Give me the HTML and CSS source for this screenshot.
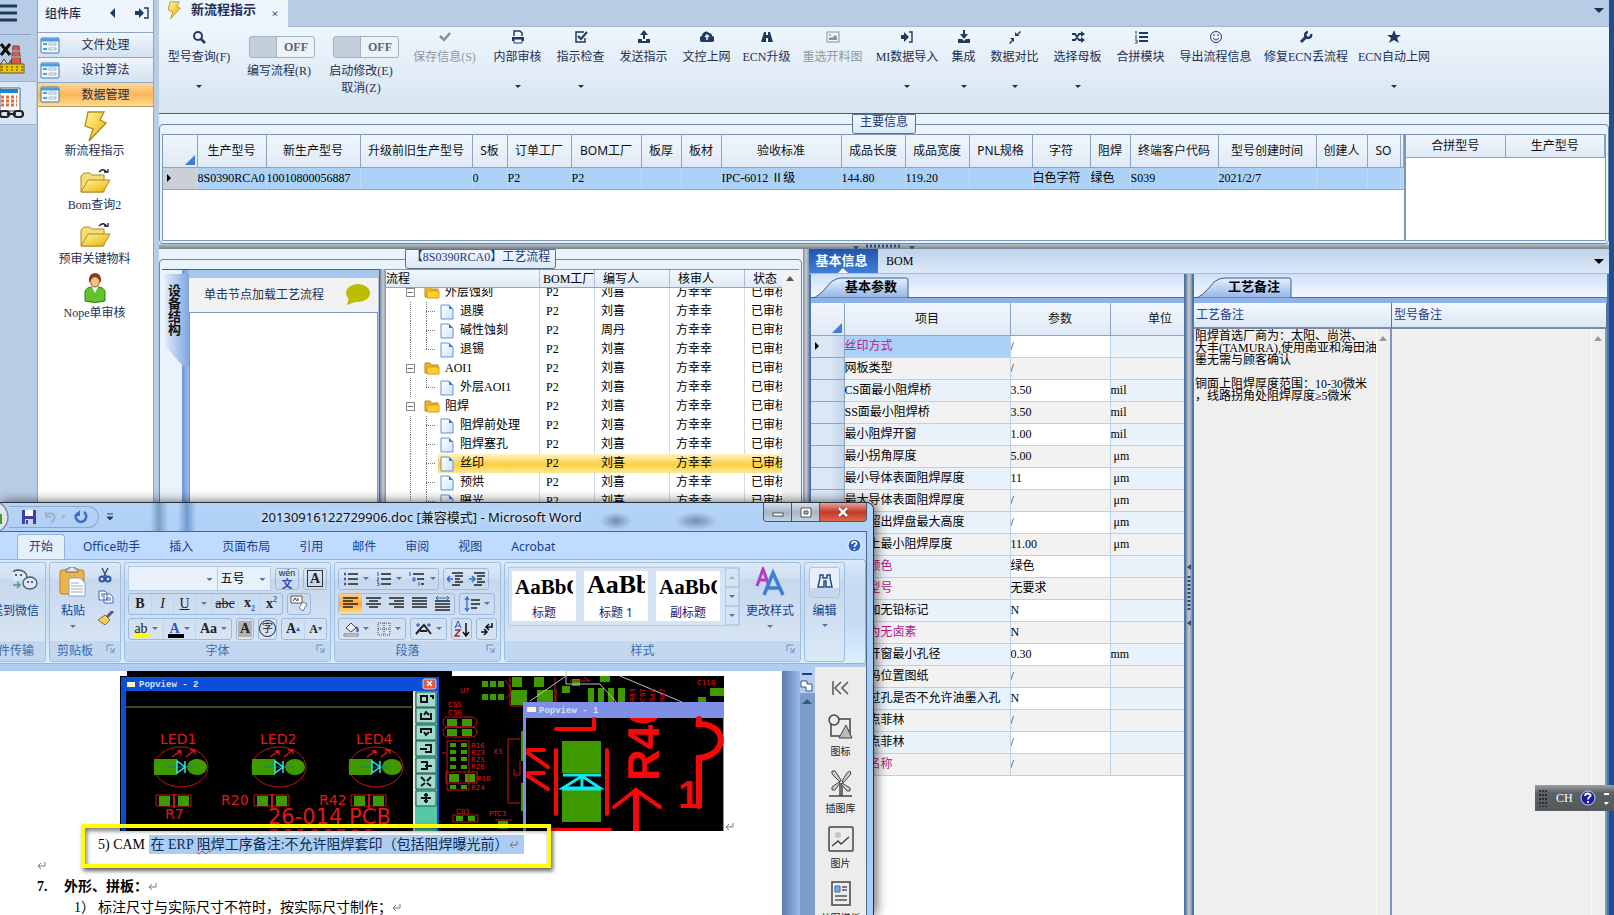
FILE: index.html
```html
<!DOCTYPE html>
<html lang="zh-CN">
<head>
    <meta charset="UTF-8">
    <meta name="viewport" content="width=device-width, initial-scale=1.0">
    <title>新流程指示</title>
    <link rel="stylesheet" href="styles.css">
</head>
<body>
    <!-- Shared icons -->
    <svg class="defs" aria-hidden="true">
        <defs>
            <linearGradient id="gold" x1="0" y1="0" x2="1" y2="1"><stop offset="0" stop-color="#fff6a0"/><stop offset="1" stop-color="#eab000"/></linearGradient>
            <linearGradient id="paper" x1="0" y1="0" x2="1" y2="1"><stop offset="0" stop-color="#fff"/><stop offset="1" stop-color="#cfe4fb"/></linearGradient>
        </defs>
        <symbol id="bolt" viewBox="0 0 24 32"><path d="M5 2H21L17 10L23 13L6 31L10 19L2 16Z" fill="url(#gold)" stroke="#b08a1c" stroke-width="1.3"/></symbol>
        <symbol id="open-folder" viewBox="0 0 32 26"><path d="M2 24V8L5 5H11L13 7H25V24Z" fill="#f7dd78" stroke="#b08a1c"/><path d="M2 24L9 12H31L24 24Z" fill="url(#gold)" stroke="#b08a1c"/><path d="M20 4Q25 -1 28 5M25 4H29V1" fill="none" stroke="#223" stroke-width="1.3"/></symbol>
        <symbol id="folder" viewBox="0 0 16 13"><path d="M1 11V1H6L7 3H14V11Z" fill="#f3b61f" stroke="#b98a2a"/><path d="M3 12V5H15V12Z" fill="#ffd02c" stroke="#d79a1c"/></symbol>
        <symbol id="page" viewBox="0 0 14 16"><path d="M1 1H9L13 5V15H1Z" fill="url(#paper)" stroke="#5f94d6"/><path d="M9 1V5H13Z" fill="#3d7ad0"/></symbol>
        <symbol id="form" viewBox="0 0 20 17"><rect x="1" y="1" width="18" height="15" rx="1" fill="#f4fafe" stroke="#3f78b4"/><path d="M1 3H19" stroke="#4f9ad8" stroke-width="3"/><path d="M3 7H7M3 12H7" stroke="#4aa0dc" stroke-width="2"/><path d="M9 6H16V8H9ZM9 11H16V13H9Z" fill="#fff" stroke="#8ba4b8" stroke-width=".8"/></symbol>
        <symbol id="ret" viewBox="0 0 9 9"><path d="M8 1V5H2M4 2L1 5L4 8" fill="none" stroke="#777"/></symbol>
        <symbol id="launch" viewBox="0 0 9 9"><path d="M1 7V1H7" fill="none" stroke="#6c8fb8"/><path d="M4 4L8 8M8 4V8H4" fill="none" stroke="#6c8fb8"/></symbol>
    </svg>

    <div class="app">
        <nav class="strip">
            <button class="burger" aria-label="菜单"><svg width="18" height="20"><path d="M0 4H17M0 11H17M0 18H17" stroke="#1f3a5f" stroke-width="3"/></svg></button>
            <button class="strip-btn" aria-label="工厂">
                <svg width="25" height="32" viewBox="0 0 25 32"><path d="M1 2L10 13M10 2L1 13" stroke="#111" stroke-width="3"/><path d="M13 4H19L21 24H11Z" fill="#d65a4a" stroke="#7c3b34"/><path d="M12 9H20M11 15H21" stroke="#8d99a8" stroke-width="2"/><path d="M0 23L4 17L8 23L11 18V24H0Z" fill="#ddd" stroke="#444"/><path d="M0 22H24V31H0Z" fill="#ecc514" stroke="#6b5b10"/><path d="M1 25H23M1 28H23" stroke="#413808" stroke-dasharray="2 3"/></svg>
            </button>
            <button class="strip-btn current" aria-label="数据">
                <svg width="25" height="32" viewBox="0 0 25 32"><path d="M0 1H20V24H0Z" fill="#fff" stroke="#49667f"/><path d="M0 4H18" stroke="#2183cf" stroke-width="4"/><path d="M1 10H17M1 14H17M1 18H17" stroke="#e46b3c" stroke-width="3" stroke-dasharray="3 2"/><g fill="none" stroke="#222" stroke-width="2.2"><rect x="0" y="24" width="9" height="6" rx="3"/><rect x="14" y="24" width="9" height="6" rx="3"/><path d="M7 27H16"/></g></svg>
            </button>
        </nav>

        <aside class="sidebar">
            <header><b>组件库</b>
                <svg width="8" height="12"><path d="M6 1V11L1 6Z" fill="#1f3a5f"/></svg>
                <svg width="14" height="12" viewBox="0 0 14 12"><path d="M0 4H4V1L9 6L4 11V8H0Z" fill="#1f3a5f"/><path d="M9 1H13V11H9" fill="none" stroke="#1f3a5f" stroke-width="1.4"/></svg>
            </header>
            <button class="cat"><svg width="20" height="17"><use href="#form"/></svg><span>文件处理</span></button>
            <button class="cat"><svg width="20" height="17"><use href="#form"/></svg><span>设计算法</span></button>
            <button class="cat active"><svg width="20" height="17"><use href="#form"/></svg><span>数据管理</span></button>
            <div class="modules">
                <button><svg width="24" height="32"><use href="#bolt"/></svg>新流程指示</button>
                <button><svg width="32" height="32" viewBox="0 -4 32 32"><use href="#open-folder" width="32" height="26"/></svg>Bom查询2</button>
                <button><svg width="32" height="32" viewBox="0 -4 32 32"><use href="#open-folder" width="32" height="26"/></svg>预审关键物料</button>
                <button><svg width="24" height="32" viewBox="0 0 24 32"><path d="M2 29V20Q3 15 9 15H15Q21 15 22 20V29Q12 32 2 29Z" fill="#62c32c" stroke="#2f7d12"/><path d="M9 15L12 21L15 15Z" fill="#fff"/><ellipse cx="12" cy="9" rx="4.500" ry="6" fill="#f2c48c" stroke="#8b5a2b"/><path d="M6 11Q5 1 12 1Q19 1 18 11Q16 6 12 5Q8 6 6 11Z" fill="#8c3a18"/></svg>Nope单审核</button>
            </div>
        </aside>

        <main class="main">
            <div class="tabbar">
                <div class="tab"><svg width="14" height="20"><use href="#bolt"/></svg><b>新流程指示</b><button aria-label="关闭">×</button></div>
                <i class="down"></i>
            </div>

            <div class="toolbar">
                <button><svg width="14" height="14"><circle cx="6" cy="6" r="4" fill="none" stroke="#1f3a5f" stroke-width="2"/><path d="M9 9L13 13" stroke="#1f3a5f" stroke-width="2.500"/></svg>型号查询(F)<i class="caret"></i></button>
                <label class="toggle"><input type="checkbox"><span class="track">OFF</span>编写流程(R)</label>
                <label class="toggle"><input type="checkbox"><span class="track">OFF</span>启动修改(E)<br>取消(Z)</label>
                <button disabled><svg width="14" height="14"><path d="M2 6L6 10L12 3" fill="none" stroke="#8b9096" stroke-width="2.500"/></svg>保存信息(S)</button>
                <button><svg width="14" height="14"><path d="M3 6V1H9L11 3V6" fill="none" stroke="#1f3a5f" stroke-width="1.500"/><path d="M1 7H13V11H1Z" fill="#1f3a5f"/><path d="M3 9H11V13H3Z" fill="#eef5fc" stroke="#1f3a5f"/></svg>内部审核<i class="caret"></i></button>
                <button><svg width="14" height="14"><path d="M10 2H2V12H11V8" fill="none" stroke="#1f3a5f" stroke-width="1.500"/><path d="M4 6L7 9L13 2" fill="none" stroke="#1f3a5f" stroke-width="2"/></svg>指示检查<i class="caret"></i></button>
                <button><svg width="14" height="14"><path d="M7 0L11 5H8V9H6V5H3Z" fill="#1f3a5f"/><path d="M1 9H5V11H9V9H13V13H1Z" fill="#1f3a5f"/></svg>发送指示</button>
                <button><svg width="14" height="14"><path d="M3 12A3 3 0 0 1 2 6A4 4 0 0 1 9 3A3 3 0 0 1 12 6A3 3 0 0 1 11 12Z" fill="#1f3a5f"/><path d="M7 5V10M5 7L7 5L9 7" fill="none" stroke="#eef5fc" stroke-width="1.500"/></svg>文控上网</button>
                <button><svg width="14" height="14"><path d="M4 2H6V12H1Z M8 2H10L13 12H8Z M5 5H9V8H5Z" fill="#1f3a5f"/></svg>ECN升级</button>
                <button disabled><svg width="14" height="14"><rect x="1" y="2" width="12" height="10" fill="none" stroke="#8b9096"/><path d="M3 10V8L5 7L6 8L9 5L11 7V10Z" fill="#8b9096"/><circle cx="4" cy="5" r="1" fill="#8b9096"/></svg>重选开料图</button>
                <button><svg width="14" height="14"><path d="M1 5H4V2L9 7L4 12V9H1Z" fill="#1f3a5f"/><path d="M9 2H12V12H9" fill="none" stroke="#1f3a5f" stroke-width="1.400"/></svg>MI数据导入<i class="caret"></i></button>
                <button><svg width="14" height="14"><path d="M7 9L3 4H6V0H8V4H11Z" fill="#1f3a5f"/><path d="M1 9H5L7 11L9 9H13V13H1Z" fill="#1f3a5f"/></svg>集成<i class="caret"></i></button>
                <button><svg width="14" height="14"><path d="M7 6V2L9 4L12 1L13 2L10 5L12 6ZM6 8H2L4 10L1 13L2 14L5 11L6 12Z" fill="#1f3a5f"/></svg>数据对比<i class="caret"></i></button>
                <button><svg width="14" height="14"><path d="M1 4H4L8 10H12M1 10H4L8 4H12" fill="none" stroke="#1f3a5f" stroke-width="1.800"/><path d="M10 1L14 4L10 7ZM10 7L14 10L10 13Z" fill="#1f3a5f"/></svg>选择母板<i class="caret"></i></button>
                <button><svg width="14" height="14"><path d="M5 3H14M5 7H14M5 11H14" stroke="#1f3a5f" stroke-width="2"/><path d="M2 1V4M1 6H3M1 8H3M1 10H3V13H1" fill="none" stroke="#1f3a5f"/></svg>合拼模块</button>
                <button><svg width="14" height="14"><circle cx="7" cy="7" r="5.500" fill="none" stroke="#1f3a5f"/><path d="M4 8Q7 12 10 8M5 4V6M9 4V6" fill="none" stroke="#1f3a5f"/></svg>导出流程信息</button>
                <button><svg width="14" height="14"><path d="M2 12L8 6" stroke="#1f3a5f" stroke-width="3"/><path d="M12 4A3 3 0 1 1 9 2" fill="none" stroke="#1f3a5f" stroke-width="2.500"/></svg>修复ECN丢流程</button>
                <button><svg width="14" height="14"><path d="M7 0L9 5L14 5L10 8L12 13L7 10L2 13L4 8L0 5L5 5Z" fill="#1f3a5f"/></svg>ECN自动上网<i class="caret"></i></button>
            </div>

            <fieldset class="group">
                <legend>主要信息</legend>
                <div class="info">
                    <div class="info-left">
                        <table class="grid models">
                            <colgroup><col class="w34"><col class="w69"><col class="w94"><col class="w112"><col class="w35"><col class="w64"><col class="w70"><col class="w40"><col class="w40"><col class="w120"><col class="w64"><col class="w64"><col class="w63"><col class="w58"><col class="w40"><col class="w88"><col class="w98"><col class="w51"><col class="w33"><col></colgroup>
                            <tr><th class="corner"></th><th>生产型号</th><th>新生产型号</th><th>升级前旧生产型号</th><th>S板</th><th>订单工厂</th><th>BOM工厂</th><th>板厚</th><th>板材</th><th>验收标准</th><th>成品长度</th><th>成品宽度</th><th>PNL规格</th><th>字符</th><th>阻焊</th><th>终端客户代码</th><th>型号创建时间</th><th>创建人</th><th>SO</th><th></th></tr>
                            <tr><td class="mark"></td><td>8S0390RCA0</td><td>10010800056887</td><td></td><td>0</td><td>P2</td><td>P2</td><td></td><td></td><td>IPC-6012 Ⅱ级</td><td>144.80</td><td>119.20</td><td></td><td>白色字符</td><td>绿色</td><td>S039</td><td>2021/2/7</td><td></td><td></td><td></td></tr>
                        </table>
                    </div>
                    <div class="info-right">
                        <table class="grid pair"><tr><th>合拼型号</th><th>生产型号</th></tr></table>
                    </div>
                </div>
            </fieldset>

            <div class="hsplit"><svg width="62" height="6"><path d="M0 2H6L3 6Z M56 2H62L59 6Z" fill="#2c4c7c"/><path d="M13 2H49" stroke="#2c4c7c" stroke-width="3" stroke-dasharray="2 2"/></svg></div>

            <div class="lower">
                <section class="flow">
                    <fieldset class="group">
                        <legend>【8S0390RCA0】工艺流程</legend>
                        <div class="flow-body">
                            <div class="device-side"><div class="device-tab"><b>设备结构</b></div></div>
                            <div class="device">
                                <div class="hint">单击节点加载工艺流程<svg width="26" height="22"><ellipse cx="13" cy="9" rx="12" ry="9" fill="#bcbc00"/><path d="M4 13L2 21L13 17Z" fill="#bcbc00"/></svg></div>
                                <div class="blank"></div>
                            </div>
                            <div class="vsplit"></div>
                            <div class="tree">
                                <div class="tree-head tr"><span>流程</span><span>BOM工厂</span><span>编写人</span><span>核审人</span><span>状态</span></div>
                                <div class="tree-body">
                                    <div class="tr"><span class="dir"><i>−</i><svg width="16" height="13"><use href="#folder"/></svg>外层蚀刻</span><span>P2</span><span>刘喜</span><span>方幸幸</span><span>已审核</span></div>
                                    <div class="tr"><span class="leaf"><svg width="14" height="16"><use href="#page"/></svg>退膜</span><span>P2</span><span>刘喜</span><span>方幸幸</span><span>已审核</span></div>
                                    <div class="tr"><span class="leaf"><svg width="14" height="16"><use href="#page"/></svg>碱性蚀刻</span><span>P2</span><span>周丹</span><span>方幸幸</span><span>已审核</span></div>
                                    <div class="tr"><span class="leaf last"><svg width="14" height="16"><use href="#page"/></svg>退锡</span><span>P2</span><span>刘喜</span><span>方幸幸</span><span>已审核</span></div>
                                    <div class="tr"><span class="dir"><i>−</i><svg width="16" height="13"><use href="#folder"/></svg>AOI1</span><span>P2</span><span>刘喜</span><span>方幸幸</span><span>已审核</span></div>
                                    <div class="tr"><span class="leaf last"><svg width="14" height="16"><use href="#page"/></svg>外层AOI1</span><span>P2</span><span>刘喜</span><span>方幸幸</span><span>已审核</span></div>
                                    <div class="tr"><span class="dir"><i>−</i><svg width="16" height="13"><use href="#folder"/></svg>阻焊</span><span>P2</span><span>刘喜</span><span>方幸幸</span><span>已审核</span></div>
                                    <div class="tr"><span class="leaf"><svg width="14" height="16"><use href="#page"/></svg>阻焊前处理</span><span>P2</span><span>刘喜</span><span>方幸幸</span><span>已审核</span></div>
                                    <div class="tr"><span class="leaf"><svg width="14" height="16"><use href="#page"/></svg>阻焊塞孔</span><span>P2</span><span>刘喜</span><span>方幸幸</span><span>已审核</span></div>
                                    <div class="tr picked"><span class="leaf"><svg width="14" height="16"><use href="#page"/></svg>丝印</span><span>P2</span><span>刘喜</span><span>方幸幸</span><span>已审核</span></div>
                                    <div class="tr"><span class="leaf"><svg width="14" height="16"><use href="#page"/></svg>预烘</span><span>P2</span><span>刘喜</span><span>方幸幸</span><span>已审核</span></div>
                                    <div class="tr"><span class="leaf"><svg width="14" height="16"><use href="#page"/></svg>曝光</span><span>P2</span><span>刘喜</span><span>方幸幸</span><span>已审核</span></div>
                                </div>
                            </div>
                            <div class="scroll"><i class="up"></i></div>
                        </div>
                    </fieldset>
                </section>
                <div class="vsplit"></div>
                <section class="detail">
                    <div class="detail-tabs"><button class="on">基本信息</button><button>BOM</button><i class="down"></i></div>
                    <div class="detail-body">
                        <div class="params">
                            <div class="slant-bar"><div class="slant"><svg width="98" height="21" viewBox="0 0 98 21"><path d="M1 21Q7 21 20 5Q25 1 30 1H95Q97 1 97 3V21Z" fill="url(#slantfill)" stroke="#3c5f94"/><defs><linearGradient id="slantfill" x1="0" y1="0" x2="0" y2="1"><stop offset="0" stop-color="#e6f0fd"/><stop offset="1" stop-color="#93b5e6"/></linearGradient></defs></svg><b>基本参数</b></div></div>
                            <div class="params-scroll">
                            <table class="grid values">
                                <colgroup><col class="w33"><col class="w166"><col class="w100"><col class="w100"></colgroup>
                                <tr><th class="corner"></th><th>项目</th><th>参数</th><th>单位</th></tr>
                                <tr class="cur"><td class="mark"></td><td class="key">丝印方式</td><td>/</td><td></td></tr>
                                <tr><td></td><td>网板类型</td><td>/</td><td></td></tr>
                                <tr><td></td><td>CS面最小阻焊桥</td><td>3.50</td><td>mil</td></tr>
                                <tr><td></td><td>SS面最小阻焊桥</td><td>3.50</td><td>mil</td></tr>
                                <tr><td></td><td>最小阻焊开窗</td><td>1.00</td><td>mil</td></tr>
                                <tr><td></td><td>最小拐角厚度</td><td>5.00</td><td> μm</td></tr>
                                <tr><td></td><td>最小导体表面阻焊厚度</td><td>11</td><td> μm</td></tr>
                                <tr><td></td><td>最大导体表面阻焊厚度</td><td>/</td><td> μm</td></tr>
                                <tr><td></td><td>塞孔超出焊盘最大高度</td><td>/</td><td> μm</td></tr>
                                <tr><td></td><td>基材上最小阻焊厚度</td><td>11.00</td><td> μm</td></tr>
                                <tr><td></td><td class="key">阻焊颜色</td><td>绿色</td><td></td></tr>
                                <tr><td></td><td class="key">油墨型号</td><td>无要求</td><td></td></tr>
                                <tr><td></td><td>是否加无铅标记</td><td>N</td><td></td></tr>
                                <tr><td></td><td class="key">是否为无卤素</td><td>N</td><td></td></tr>
                                <tr><td></td><td>阻焊开窗最小孔径</td><td>0.30</td><td>mm</td></tr>
                                <tr><td></td><td>二维码位置图纸</td><td>/</td><td></td></tr>
                                <tr><td></td><td>阻焊过孔是否不允许油墨入孔</td><td>N</td><td></td></tr>
                                <tr><td></td><td>阻挡点菲林</td><td>/</td><td></td></tr>
                                <tr><td></td><td>阻挡点菲林</td><td>/</td><td></td></tr>
                                <tr><td></td><td class="key">网版名称</td><td>/</td><td></td></tr>
                            </table>
                            </div>
                        </div>
                        <div class="vsplit"><svg width="6" height="64"><path d="M5 1V7L1 4Z M5 57V63L1 60Z" fill="#2c4c7c"/><path d="M3 13V49" stroke="#2c4c7c" stroke-width="3" stroke-dasharray="2 2"/></svg></div>
                        <div class="notes">
                            <div class="slant-bar"><div class="slant"><svg width="98" height="21" viewBox="0 0 98 21"><path d="M1 21Q7 21 20 5Q25 1 30 1H95Q97 1 97 3V21Z" fill="url(#slantfill)" stroke="#3c5f94"/></svg><b>工艺备注</b></div></div>
                            <div class="notes-grid">
                                <label for="craft">工艺备注</label><label for="model">型号备注</label>
                                <div class="memo"><textarea id="craft" spellcheck="false">阻焊首选厂商为：太阳、尚洪、
大丰(TAMURA),使用南亚和海田油
墨无需与顾客确认

铜面上阻焊厚度范围：10-30微米
，线路拐角处阻焊厚度≥5微米</textarea><div class="scroll"><i class="up"></i></div></div>
                                <div class="memo"><textarea id="model"></textarea><div class="scroll"><i class="up"></i></div></div>
                            </div>
                        </div>
                    </div>
                </section>
            </div>
        </main>
    </div>

    <!-- Word window -->
    <div class="word">
        <div class="word-title">
            <svg class="orb" width="9" height="34"><circle cx="-8" cy="17" r="16" fill="#dfe6ee" stroke="#7d8b9c" stroke-width="1.500"/><path d="M0 14H2V24H0Z" fill="#4c9a1c"/></svg>
            <div class="qat">
                <button aria-label="保存"><svg width="14" height="14"><path d="M0 0H14V14H0Z" fill="#3f3fa8"/><path d="M3 0H11V6H3Z" fill="#fff"/><path d="M3 9H11V14H3Z" fill="#cfd4ec"/><path d="M4 10H6V14H4Z" fill="#3f3fa8"/></svg></button>
                <button aria-label="撤消"><svg width="22" height="14"><path d="M2 2V7H7M2 7Q5 2 9 4Q13 8 7 13" fill="none" stroke="#a3b4c8" stroke-width="2.200"/><path d="M17 5H22L19 9Z" fill="#a3b4c8"/></svg></button>
                <button aria-label="重复"><svg width="14" height="14"><path d="M4 3Q0 6 3 10Q7 14 11 10Q14 5 10 2" fill="none" stroke="#3d6fc9" stroke-width="2.500"/><path d="M6 0V6H0Z" fill="#3d6fc9"/></svg></button>
            </div>
            <svg class="more" width="8" height="8"><path d="M1 1H7M1 4H7L4 7Z" fill="#2b4569" stroke="#2b4569"/></svg>
            <span class="doc-name">20130916122729906.doc [兼容模式] - Microsoft Word</span>
            <div class="win-btns">
                <button aria-label="最小化"><svg width="12" height="12"><rect x="1" y="7" width="10" height="3" fill="#fff" stroke="#555"/></svg></button>
                <button aria-label="还原"><svg width="12" height="12"><path d="M1 2H11V11H1ZM4 5V8H8V5Z" fill="#fff" stroke="#555" fill-rule="evenodd"/></svg></button>
                <button class="close" aria-label="关闭"><svg width="12" height="12"><path d="M2 2L10 10M10 2L2 10" stroke="#6b2b25" stroke-width="4"/><path d="M2 2L10 10M10 2L2 10" stroke="#fff" stroke-width="2.500"/></svg></button>
            </div>
        </div>
        <div class="word-inner">
            <div class="ribbon-tabs">
                <button class="on">开始</button><button>Office助手</button><button>插入</button><button>页面布局</button><button>引用</button><button>邮件</button><button>审阅</button><button>视图</button><button>Acrobat</button>
                <svg class="help" width="15" height="15"><circle cx="7.500" cy="7.500" r="6.500" fill="#2d5fd0" stroke="#fff"/><path d="M5 6Q5 3.500 7.500 3.500Q10 4 9.500 6Q7.500 7.500 7.500 9M7.500 10.500V12" fill="none" stroke="#fff" stroke-width="1.600"/></svg>
            </div>
            <div class="ribbon">
                <div class="rgroup wechat">
                    <div class="rbody"><button class="big"><svg width="26" height="30"><g fill="#dbe8f7" stroke="#4b5a6b" stroke-width="1.300"><path d="M-2 15Q-6 5 4 3Q14 3 14 11"/><ellipse cx="17" cy="16" rx="7" ry="6"/></g><path d="M-1 18H7M4 15L7 18L4 21" fill="none" stroke="#4e9d73" stroke-width="1.500"/><path d="M3 7V9M8 7V9M15 14V16M19 14V16" stroke="#333" stroke-width="1.500"/></svg><span>发送到微信</span></button></div>
                    <div class="rlabel">文件传输</div>
                </div>
                <div class="rgroup clip">
                    <div class="rbody">
                        <button class="big"><svg width="28" height="30"><rect x="1" y="3" width="24" height="24" rx="2" fill="#eab44c" stroke="#b98323"/><path d="M7 5V2H10V0H16V2H19V5Z" fill="#e8e8e8" stroke="#666"/><path d="M10 11H21L26 16V29H10Z" fill="#fff" stroke="#8ba0bb"/><path d="M12 16H20M12 19H24M12 22H24M12 25H24" stroke="#9aa9bd"/></svg><span>粘贴</span><i class="caret"></i></button>
                        <div class="minis">
                            <button aria-label="剪切"><svg width="14" height="15"><path d="M4 0L9 10M10 0L5 10" stroke="#44566e" stroke-width="1.500"/><circle cx="4" cy="11" r="2.500" fill="none" stroke="#2d55b0" stroke-width="2"/><circle cx="10" cy="11" r="2.500" fill="none" stroke="#2d55b0" stroke-width="2"/></svg></button>
                            <button aria-label="复制"><svg width="16" height="14"><path d="M1 1H7L9 3V10H1ZM6 4H12L15 7V13H6Z" fill="#fff" stroke="#3f67ae"/><path d="M8 8H13M8 10H13M3 4H6M3 6H5" stroke="#3f67ae"/></svg></button>
                            <button aria-label="格式刷"><svg width="16" height="14"><path d="M15 0L9 6" stroke="#4b5a86" stroke-width="3"/><path d="M7 4L12 9L7 14L0 9Z" fill="#f0cf5a" stroke="#8d7421"/></svg></button>
                        </div>
                    </div>
                    <div class="rlabel">剪贴板<svg width="9" height="9"><use href="#launch"/></svg></div>
                </div>
                <div class="rgroup font">
                    <div class="rbody rows">
                        <div class="row">
                            <select class="face" aria-label="字体"><option></option></select><select class="size" aria-label="字号"><option>五号</option></select>
                            <button class="one"><svg width="22" height="20"><text x="11" y="7" class="py">wén</text><text x="11" y="19" class="wen">文</text></svg></button><button class="one"><span class="boxed">A</span></button>
                        </div>
                        <div class="row">
                            <div class="set w22s"><button><b>B</b></button><button><em>I</em></button><button><u>U</u></button><button class="slim"><i class="caret"></i></button><button class="wide"><s>abc</s></button><button><b>x<sub>2</sub></b></button><button><b>x<sup>2</sup></b></button></div>
                            <button class="one"><svg width="18" height="18"><path d="M1 1H12V8H1Z" fill="#fff" stroke="#555"/><path d="M3 6L5 3L7 6M8 3V6" fill="none" stroke="#333"/><path d="M9 13L13 7L17 9L13 16Z" fill="#fff" stroke="#777"/></svg></button>
                        </div>
                        <div class="row">
                            <div class="set"><button class="hl">ab<i class="caret"></i></button><button class="fc"><b>A</b><i class="caret"></i></button><button><b>Aa</b><i class="caret"></i></button></div>
                            <button class="one"><b class="shade">A</b></button><button class="one"><span class="ring">字</span></button>
                            <div class="set w22s"><button><b>A</b><sup>▴</sup></button><button><b class="sm">A</b><sup>▾</sup></button></div>
                        </div>
                    </div>
                    <div class="rlabel">字体<svg width="9" height="9"><use href="#launch"/></svg></div>
                </div>
                <div class="rgroup para">
                    <div class="rbody rows">
                        <div class="row">
                            <div class="set w33s">
                                <button><svg width="16" height="14"><path d="M5 2H15M5 7H15M5 12H15" stroke="#222" stroke-width="1.500"/><path d="M1 2H3M1 7H3M1 12H3" stroke="#2c5bb5" stroke-width="2.500"/></svg><i class="caret"></i></button>
                                <button><svg width="16" height="14"><path d="M5 2H15M5 7H15M5 12H15" stroke="#222" stroke-width="1.500"/><path d="M2 0V4M1 6H3L1 9H3M1 11H3V14H1" fill="none" stroke="#2c5bb5"/></svg><i class="caret"></i></button>
                                <button><svg width="18" height="14"><path d="M5 2H16M9 7H16M13 12H16" stroke="#222" stroke-width="1.500"/><path d="M2 0V4M5 6H7V9H5ZM11 10V14" fill="none" stroke="#2c5bb5"/></svg><i class="caret"></i></button>
                            </div>
                            <div class="set w22s">
                                <button><svg width="16" height="14"><path d="M5 1H16M8 4H16M8 7H13M8 10H16M5 13H13" stroke="#222" stroke-width="1.500"/><path d="M6 7H1M3 4L0 7L3 10" fill="none" stroke="#2c6bd5" stroke-width="1.500"/></svg></button>
                                <button><svg width="16" height="14"><path d="M5 1H16M8 4H16M8 7H13M8 10H16M5 13H13" stroke="#222" stroke-width="1.500"/><path d="M0 7H5M3 4L6 7L3 10" fill="none" stroke="#2c6bd5" stroke-width="1.500"/></svg></button>
                            </div>
                        </div>
                        <div class="row">
                            <div class="set w23s">
                                <button class="sel"><svg width="15" height="13"><path d="M0 1H15M0 4H10M0 7H15M0 10H10" stroke="#222" stroke-width="1.500"/></svg></button>
                                <button><svg width="15" height="13"><path d="M0 1H15M3 4H12M0 7H15M3 10H12" stroke="#222" stroke-width="1.500"/></svg></button>
                                <button><svg width="15" height="13"><path d="M0 1H15M5 4H15M0 7H15M5 10H15" stroke="#222" stroke-width="1.500"/></svg></button>
                                <button><svg width="15" height="13"><path d="M0 1H15M0 4H15M0 7H15M0 10H15" stroke="#222" stroke-width="1.500"/></svg></button>
                                <button><svg width="15" height="15"><path d="M0 5H15M0 8H15M0 11H15M0 14H15" stroke="#222" stroke-width="1.500"/><path d="M1 2H14M3 0L1 2L3 4M12 0L14 2L12 4" fill="none" stroke="#2c6bd5"/></svg></button>
                            </div>
                            <div class="set"><button><svg width="16" height="16"><path d="M7 4H16M7 8H16M7 12H13" stroke="#222" stroke-width="1.500"/><path d="M3 1V15M1 4L3 1L5 4M1 12L3 15L5 12" fill="none" stroke="#2c6bd5" stroke-width="1.300"/></svg><i class="caret"></i></button></div>
                        </div>
                        <div class="row">
                            <div class="set w33s">
                                <button><svg width="16" height="16"><path d="M3 7L8 2L13 7L8 11Z" fill="#f4f7fb" stroke="#445"/><path d="M13 6Q16 8 14 11" fill="none" stroke="#2c5bb5" stroke-width="2"/><path d="M1 13H15V15H1Z" fill="#fff" stroke="#777"/></svg><i class="caret"></i></button>
                                <button><svg width="14" height="14"><path d="M1 1H13V13H1ZM7 1V13M1 7H13" fill="none" stroke="#444" stroke-dasharray="1 1"/></svg><i class="caret"></i></button>
                            </div>
                            <div class="set"><button><svg width="17" height="14"><path d="M1 12L6 6L9 3L16 12M5 9H12" fill="none" stroke="#222" stroke-width="2"/><path d="M3 1V5M1 3H5M14 1V5M12 3H16" stroke="#2c3bc5"/></svg><i class="caret"></i></button></div>
                            <button class="one"><svg width="16" height="16"><path d="M1 7L4 0L7 7M2 5H6" fill="none" stroke="#2c5bb5"/><path d="M1 9H6L1 15H6" fill="none" stroke="#a03030" stroke-width="1.500"/><path d="M12 2V14M9 11L12 15L15 11" fill="none" stroke="#111" stroke-width="1.500"/></svg></button>
                            <button class="one"><svg width="14" height="14"><path d="M12 1V5H6M9 2L6 5L9 8M1 10H7M4 7L7 10L4 13" fill="none" stroke="#111" stroke-width="1.500"/></svg></button>
                        </div>
                    </div>
                    <div class="rlabel">段落<svg width="9" height="9"><use href="#launch"/></svg></div>
                </div>
                <div class="rgroup styles">
                    <div class="rbody">
                        <div class="gallery">
                            <button class="card"><b>AaBbC</b><span>标题</span></button>
                            <button class="card h1"><b>AaBb</b><span>标题 1</span></button>
                            <button class="card"><b>AaBbC</b><span>副标题</span></button>
                            <div class="steps"><button aria-label="上"><i class="up"></i></button><button aria-label="下"><i class="caret"></i></button><button aria-label="更多"><i class="caret"></i></button></div>
                        </div>
                        <button class="big"><svg width="30" height="30"><path d="M2 19L8 2L14 19M4 13H12" fill="none" stroke="#b23fc0" stroke-width="3"/><path d="M9 28L18 6L28 28M12 21H24" fill="none" stroke="#3f7fd0" stroke-width="3.500"/></svg><span>更改样式</span><i class="caret"></i></button>
                    </div>
                    <div class="rlabel">样式<svg width="9" height="9"><use href="#launch"/></svg></div>
                </div>
                <div class="rgroup edit">
                    <button class="big"><span class="tile"><svg width="16" height="14"><path d="M3 1H6V4H10V1H13V4L15 13H9V7H7V13H1L3 4Z" fill="#e8f0fa" stroke="#244a86" stroke-width="1.500"/></svg></span><span>编辑</span><i class="caret"></i></button>
                </div>
            </div>

            <div class="doc-area">
                <div class="sheet">
                    <p class="figure">
                        <svg width="604" height="160" viewBox="0 0 604 160" class="pcb">
                            <path d="M7 0H332V5H604V160H0V5H7Z" fill="#000"/>
                            <!-- middle board strip -->
                            <g fill="#3f9a00">
                                <path d="M362 10H368V16H362ZM370 10H376V16H370ZM378 10H384V16H378ZM362 23H368V29H362ZM370 23H376V29H370ZM378 23H384V29H378ZM392 6H402V16H392ZM414 6H424V16H414ZM391 19H407V34H391ZM417 19H433V34H417ZM442 15H450V22H442ZM452 8H460V15H452ZM468 17H474V31H468ZM478 17H484V31H478ZM488 17H494V31H488ZM498 17H505V31H498ZM480 5H490V11H480ZM590 17H604V25H590ZM578 26H586V32H578Z"/>
                                <path d="M327 48H337V55H327ZM342 48H352V55H342ZM327 58H337V65H327ZM342 58H352V65H342Z"/>
                                <path d="M330 72H336V76H330ZM341 72H347V76H341ZM330 79H336V83H330ZM341 79H347V83H341ZM330 86H336V90H330ZM341 86H347V90H341ZM330 94H336V98H330ZM341 94H347V98H341ZM329 103H339V111H329ZM345 103H355V111H345ZM330 114H336V118H330ZM341 114H347V118H341Z"/>
                                <path d="M336 145H343V150H336ZM348 145H355V150H348ZM378 150H388V158H378ZM401 60H404V90H401ZM401 112H404V140H401Z"/>
                            </g>
                            <g fill="none" stroke="#c81414">
                                <rect x="323" y="46" width="34" height="10" rx="5"/><rect x="323" y="56" width="34" height="10" rx="5"/>
                                <path d="M327 70H349V119H327ZM322 82H327M326 101H357V112H326ZM388 68H402M388 68V132H402M400 90V104H394V98"/>
                                <path d="M333 144H358V151H333ZM330 155H402M375 149H392M390 6V35H435V6M436 18V33M450 10H470L464 6M385 9L392 20L386 28"/>
                            </g>
                            <g fill="none" stroke="#b9bdc2"><path d="M446 0V13H480L497 32M446 5L410 30M500 5L562 31"/></g>
                            <g class="mark-sm">
                                <text x="340" y="22">U7</text><text x="328" y="36">C55</text><text x="328" y="44">C56</text>
                                <text x="351" y="77">R16</text><text x="351" y="84">R23</text><text x="351" y="91">R25</text><text x="351" y="98">R26</text><text x="357" y="110">R18</text><text x="351" y="119">R24</text>
                                <text x="373" y="83">X3</text><text x="336" y="143">C83</text><text x="369" y="145">PTC3</text><text x="577" y="14">C118</text>
                                <text transform="translate(515 31) rotate(-90)">R43</text><text transform="translate(525 31) rotate(-90)">C97</text><text transform="translate(535 31) rotate(-90)">R48</text><text transform="translate(545 31) rotate(-90)">R47</text>
                            </g>
                            <!-- first view -->
                            <path d="M1 6H319V160H1Z" fill="#0b4fd8"/><path d="M6 20H293V160H6Z" fill="#000"/><path d="M293 20H295V160H293Z" fill="#e0efd8"/><path d="M295 20H317V160H295Z" fill="#56c9a4"/>
                            <path d="M6 36H292" stroke="#8d8a35"/>
                            <rect x="7" y="11" width="8" height="5" fill="#fff3c0"/><text x="19" y="16" class="cap">Popview - 2</text>
                            <rect x="303" y="8" width="13" height="10" rx="2" fill="#e05a3c" stroke="#fff" stroke-width=".7"/><path d="M307 10L312 15M312 10L307 15" stroke="#fff" stroke-width="1.500"/>
                            <g fill="#9fdccb" stroke="#24544a"><path d="M296 21H316V36H296ZM296 37H316V52H296ZM296 54H316V69H296ZM296 70H316V85H296ZM296 87H316V102H296ZM296 103H316V118H296ZM296 120H316V135H296Z"/></g>
                            <g fill="none" stroke="#111" stroke-width="2"><path d="M301 25H307V31H301ZM310 25H313V28M301 42V48H311V42M304 44L306 41L309 44M301 62V58H311V62M304 61L306 64L309 61M305 74H311V81H305M300 78H307M301 91H307V98H301M305 95H312"/><path d="M301 106L305 110M311 106L307 110M301 115L305 112M311 115L307 112M306 122V132M301 127H311M304 124H308M304 130H308"/></g>
                            <g id="led">
                                <ellipse cx="61" cy="96" rx="27" ry="20" fill="none" stroke="#c81414"/><path d="M34 88H57V104H34Z" fill="#3f9a00"/><ellipse cx="77" cy="96" rx="10" ry="8" fill="#3f9a00"/>
                                <path d="M46 96H76" stroke="#19807c"/><path d="M57 90V102L65 96ZM65 90V102" fill="none" stroke="#2fe3e8" stroke-width="1.500"/>
                                <path d="M52 86L61 80M57 80H61V84M66 86L75 79M70 79H75V83" fill="none" stroke="#e01818" stroke-width="1.300"/>
                                <path d="M36 124H71V135H36Z" fill="none" stroke="#c81414"/><path d="M39 125H50V135H39ZM58 125H69V135H58Z" fill="#3f9a00"/><path d="M54 123V137" stroke="#c81414" stroke-width="2"/>
                            </g>
                            <use href="#led" x="98"/><use href="#led" x="195"/>
                            <g class="mark-md"><text x="40" y="73">LED1</text><text x="140" y="73">LED2</text><text x="236" y="73">LED4</text><text x="45" y="148">R7</text><text x="101" y="134">R20</text><text x="199" y="134">R42</text></g>
                            <g class="mark-lg"><text x="148" y="153">26-014 PCB</text><text x="148" y="174">20100500</text></g>
                            <!-- second view -->
                            <path d="M403 31H604V160H403Z" fill="#7f8ee6"/><path d="M406 47H603V160H406Z" fill="#000"/>
                            <rect x="407" y="36" width="9" height="5" fill="#fff3c0"/><text x="419" y="42" class="cap">Popview - 1</text>
                            <path d="M442 70H481V102H442ZM442 119H481V151H442Z" fill="#3f9a00"/>
                            <path d="M443 104H481M462 105V118M443 117L462 105L480 117ZM442 118H481" fill="none" stroke="#10e6ee" stroke-width="3"/>
                            <g fill="none" stroke="#f50808" stroke-width="4" stroke-linecap="round">
                                <path d="M436 58H474V48M436 79V143M487 79V143M408 82L428 96M408 79H424M408 105L428 118M408 102H424M494 136L516 119L540 136M432 159H490"/>
                                <path d="M516 160V120M579 48V53C608 53 608 84 579 87V135" stroke-width="6"/>
                            </g>
                            <svg x="406" y="47" width="197" height="113"><text transform="translate(133 63) rotate(-90)" class="huge">R40</text></svg>
                            <text x="558" y="137" class="one-mark">1</text>
                        </svg><svg class="ret" width="9" height="9"><use href="#ret"/></svg>
                    </p>
                    <p class="note">5) CAM <mark>在 ERP <span class="wavy">阻</span>焊工序备注:不允许阻焊套印（包括阻焊曝光前）<svg width="9" height="9"><use href="#ret"/></svg></mark></p>
                    <p class="empty"><svg width="9" height="9"><use href="#ret"/></svg></p>
                    <p class="chapter"><span>7.</span>外形、拼板：<svg width="9" height="9"><use href="#ret"/></svg></p>
                    <p class="item"><span>1）</span>标注尺寸与实际尺寸不符时，按实际尺寸制作；<svg width="9" height="9"><use href="#ret"/></svg></p>
                    <div class="yellow-box"></div>
                </div>
                <div class="gutter"></div>
                <div class="doc-scroll"><svg width="14" height="34"><path d="M2 3H12" stroke="#22406e" stroke-width="2"/><path d="M1 10H7V13H12V20H6V16H1Z" fill="#fff" stroke="#33507c"/><path d="M2 33H12L7 28Z" fill="#3a5684"/></svg></div>
                <div class="pane">
                    <button aria-label="收起"><svg width="18" height="14"><path d="M1 0V14M9 1L3 7L9 13M16 1L10 7L16 13" fill="none" stroke="#555" stroke-width="1.500"/></svg></button>
                    <button><svg width="26" height="26"><path d="M10 5H22V22H3V10" fill="none" stroke="#444" stroke-width="1.500"/><circle cx="6" cy="6" r="5" fill="#ececec" stroke="#444" stroke-width="1.500"/><path d="M18 11L24 24H11Z" fill="#b9b9b9" stroke="#444"/></svg>图标</button>
                    <button><svg width="26" height="28"><path d="M1 27H24M12 14V27M14 14V27" stroke="#444" stroke-width="1.500"/><g fill="#ccc" stroke="#444"><path d="M12 13L4 5L4 2L7 2L13 11ZM14 12L19 4L22 2L23 5L15 14ZM14 14L22 19L22 22L19 22L13 15ZM12 14L7 21L4 21L4 18L11 13Z"/></g></svg>插图库</button>
                    <button><svg width="26" height="26"><rect x="1" y="1" width="24" height="24" rx="1" fill="none" stroke="#444" stroke-width="1.500"/><circle cx="10" cy="9" r="3" fill="#c4c4c4"/><path d="M4 20L10 15L13 18L21 11" fill="none" stroke="#444" stroke-width="1.500"/></svg>图片</button>
                    <button><svg width="20" height="26"><rect x="1" y="1" width="18" height="23" fill="none" stroke="#444" stroke-width="1.500"/><path d="M4 5H9V11H4Z" fill="#6db3ea" stroke="#2a6cab"/><path d="M11 6H16M11 9H16M4 15H16M4 19H16" stroke="#555" stroke-width="1.500"/></svg>关图模板</button>
                </div>
            </div>
        </div>
    </div>

    <div class="ime">
        <svg width="10" height="18"><path d="M1 1V18M4 1V18M7 1V18" stroke="#1c1f20" stroke-width="1.500" stroke-dasharray="2 2"/></svg>
        <span>CH</span>
        <svg width="16" height="16"><circle cx="8" cy="8" r="7" fill="#1b1ba8" stroke="#c9cdf0"/><path d="M5 6Q5 3.500 8 3.500Q11 4 10.500 6Q8 7.500 8 9.500M8 11V13" fill="none" stroke="#fff" stroke-width="1.800"/></svg>
        <svg width="6" height="18"><path d="M1 4H6V6H1ZM1 13H6L3 16Z" fill="#fff"/></svg>
    </div>
</body>
</html>
```
FILE: styles.css
```css
* {
    margin: 0;
    padding: 0;
    box-sizing: border-box;
}

body {
    height: 100vh;
    overflow: hidden;
    background: #b9cce5;
    color: #1e2f52;
    font-family: "Liberation Serif", "Noto Sans CJK SC", serif;
    font-size: 12px;
    line-height: 16px;
}

button, select, textarea {
    border: none;
    background: none;
    color: inherit;
    font: inherit;
}

svg {
    flex: none;
    display: block;
    overflow: hidden;
}

b {
    font-weight: bold;
}

table {
    border-collapse: collapse;
    table-layout: fixed;
}

fieldset {
    min-width: 0;
    border: none;
}

.defs {
    position: absolute;
    width: 0;
    height: 0;
}

.caret, .down, .up {
    display: block;
    width: 0;
    height: 0;
    border: 3px solid transparent;
    border-top-color: currentColor;
    border-bottom: none;
}

.up {
    border: 4px solid transparent;
    border-bottom: 5px solid #555;
    border-top: none;
}

.app {
    display: grid;
    grid-template-columns: 37px 117px minmax(0, 1fr);
    height: 100vh;
}

/* Left strip */
.strip {
    background: #b9cce5;
    display: flex;
    flex-direction: column;
}

.burger {
    height: 35px;
    margin-right: 6px;
    border-bottom: 1px solid #8ba2c2;
}

.burger svg {
    margin-top: -10px;
}

.strip-btn {
    height: 46px;
    display: flex;
    align-items: center;
}

.strip-btn.current {
    height: 44px;
    margin-right: 1px;
    background: #d9e6f5;
    border-top: 1px solid #9db3d0;
    border-bottom: 1px solid #9db3d0;
}

/* Sidebar */
.sidebar {
    display: flex;
    flex-direction: column;
    background: #fff;
    border-left: 1px solid #8ea6c6;
    border-right: 1px solid #8ea6c6;
}

.sidebar header {
    display: flex;
    align-items: center;
    height: 32px;
    padding: 0 4px 6px 7px;
    background: #eef4fb;
    font-family: "Noto Sans CJK SC", sans-serif;
}

.sidebar header b {
    flex: 1;
    font-weight: 500;
}

.sidebar header svg {
    margin-left: 18px;
}

.sidebar header b + svg {
    margin: 0;
}

.cat {
    display: flex;
    align-items: center;
    height: 25px;
    padding: 0 2px;
    border-top: 1px solid #8ea6c6;
    background: linear-gradient(#f1f6fc, #d3e1f1);
}

.cat span {
    flex: 1;
}

.cat.active {
    background: linear-gradient(#fbd9a0, #fcb557 50%, #fcdc8e);
    border-bottom: 1px solid #b59a6a;
}

.modules {
    padding-right: 2px;
}

.modules button {
    display: flex;
    flex-direction: column;
    align-items: center;
    width: 100%;
    height: 54px;
    padding-top: 3px;
    gap: 1px;
}

/* Main column */
.main {
    display: flex;
    flex-direction: column;
    min-width: 0;
    margin-left: 5px;
    border-right: 5px solid #1c4f8f;
    background: #e9f2fb;
}

.tabbar {
    display: flex;
    justify-content: space-between;
    height: 27px;
    background: #b9cce5;
    border-bottom: 1px solid #a2b7d2;
}

.tab {
    display: flex;
    gap: 10px;
    height: 27px;
    padding: 0 8px;
    background: #edf5fd;
    font-size: 13px;
    line-height: 19px;
}

.tab button {
    width: 10px;
    margin-left: 4px;
}

.tabbar .down {
    margin: 8px 5px;
    border-width: 5px;
    border-bottom: none;
}

.toolbar {
    display: grid;
    grid-template-columns: 80px 80px 84px 83px 63px 63px 63px 63px 57px 75px 74px 39px 63px 63px 63px 87px 94px 82px;
    height: 87px;
    padding-top: 3px;
    background: linear-gradient(#eef6fd, #d7e4f1);
    border-bottom: 1px solid #46607f;
}

.toolbar button {
    display: flex;
    flex-direction: column;
    align-items: center;
    white-space: nowrap;
    line-height: 26px;
}

.toolbar button .caret {
    margin-top: 15px;
}

.toolbar button:disabled {
    color: #92979d;
}

.toggle {
    padding-top: 6px;
    line-height: 17px;
    text-align: center;
}

.toggle input {
    position: absolute;
    opacity: 0;
}

.track {
    display: block;
    width: 66px;
    height: 22px;
    margin: 0 4px 5px auto;
    padding-left: 28px;
    border: 1px solid #a3b0be;
    border-radius: 3px;
    background: linear-gradient(90deg, #c3cfdc 26px, #a3b0be 26px, #a3b0be 27px, #edf3f9 27px);
    color: #5b6570;
    font: bold 12px/20px "Liberation Serif", serif;
}

/* Group boxes: the legend sits on the border line */
.group {
    display: flex;
    flex-direction: column;
    border: 1px solid #6d86a5;
    border-radius: 4px;
    background: #eaf3fc;
}

.group legend {
    height: 20px;
    margin: 0 auto;
    padding: 0 7px;
    border: 1px solid #5b7190;
    border-radius: 0 0 3px 3px;
    background: linear-gradient(#f2f7fd, #dce8f5);
    color: #203a7a;
    line-height: 14px;
}

.flow .group legend {
    padding: 0 5px;
}

.info {
    display: flex;
    height: 107px;
    margin: 0 2px 2px;
    border: 1px solid #7b97bd;
    background: #fff;
}

.info-left {
    flex: 1;
    min-width: 0;
}

.info-right {
    flex: none;
    width: 201px;
    border-left: 2px solid #7b97bd;
}

.grid {
    width: 100%;
}

.grid th {
    height: 32px;
    border: 1px solid #8da4c3;
    border-top: none;
    background: linear-gradient(#f1f6fc, #dfe9f5);
    color: #111;
    font-family: "Noto Sans", "Noto Sans CJK SC", sans-serif;
    font-weight: normal;
    white-space: nowrap;
}

.grid th:first-child {
    border-left: none;
}

.grid td {
    height: 22px;
    padding: 0;
    color: #000;
    white-space: nowrap;
    overflow: hidden;
}

.grid .corner {
    position: relative;
}

.corner::after {
    content: "";
    position: absolute;
    right: 2px;
    bottom: 2px;
    border: 5px solid #3b7fd8;
    border-top-color: transparent;
    border-left-color: transparent;
}

.grid .mark {
    background: #c9d0d8;
}

.mark::before {
    content: "";
    display: block;
    width: 0;
    margin-left: 4px;
    border: 4px solid transparent;
    border-left-color: #000;
    border-right: none;
}

.models td {
    background: #acd1f7;
    border-right: 1px solid #bfdbf8;
    border-bottom: 1px solid #8da4c3;
}

.pair th {
    height: 22px;
}

.w33 { width: 33px; }
.w34 { width: 34px; }
.w35 { width: 35px; }
.w40 { width: 40px; }
.w51 { width: 51px; }
.w58 { width: 58px; }
.w63 { width: 63px; }
.w64 { width: 64px; }
.w69 { width: 69px; }
.w70 { width: 70px; }
.w88 { width: 88px; }
.w94 { width: 94px; }
.w98 { width: 98px; }
.w100 { width: 100px; }
.w112 { width: 112px; }
.w120 { width: 120px; }
.w166 { width: 166px; }

.hsplit {
    display: flex;
    justify-content: center;
    height: 5px;
    background: linear-gradient(#b9c0c8, #76828f);
}

.vsplit {
    flex: none;
    display: flex;
    align-items: center;
    width: 6px;
    background: linear-gradient(90deg, #7f8c9a, #c5ccd4, #8592a2);
}

.lower {
    flex: 1;
    display: flex;
    min-height: 0;
}

/* Process tree */
.flow {
    flex: none;
    display: flex;
    width: 644px;
    padding-right: 1px;
    background: #eaf3fc;
}

.flow .group {
    flex: 1;
}

.flow-body {
    display: flex;
    height: 640px;
    margin: 0 2px;
}

.device-side {
    width: 27px;
    padding: 4px 0 0 3px;
    border-top: 1px solid #3c5f94;
    background: linear-gradient(90deg, #eaf3fc 20px, #6d97d8 20px, #9dbdea);
}

.device-tab {
    height: 92px;
    padding: 10px 0 0 1px;
    background: linear-gradient(90deg, #dfeafa, #7ea6e0);
    color: #111;
    font-size: 13px;
    clip-path: polygon(0 0, 100% 0, 100% 100%, 18px 100%, 0 72px);
}

.device-tab b {
    writing-mode: vertical-rl;
    line-height: 14px;
}

.device {
    display: flex;
    flex-direction: column;
    width: 191px;
    padding: 8px 1px 0 0;
    border: 1px solid #3f68a8;
    border-left: none;
    background: #a9c6ee;
}

.hint {
    display: flex;
    align-items: center;
    justify-content: space-between;
    height: 34px;
    padding: 0 7px 0 15px;
    background: #f2f2f2;
}

.blank {
    flex: 1;
    border: 1px solid #7b97bd;
    background: #fff;
}

.tree {
    flex: 1;
    min-width: 0;
    overflow: hidden;
    border-top: 1px solid #7b97bd;
    background: linear-gradient(90deg, transparent 153px, #d2dae4 153px 154px, transparent 154px 208px, #d2dae4 208px 209px, transparent 209px 283px, #d2dae4 283px 284px, transparent 284px 358px, #d2dae4 358px 359px, transparent 359px) #fff;
    color: #000;
}

.tr {
    display: grid;
    grid-template-columns: 154px 55px 75px 75px 75px;
    width: 434px;
    height: 19px;
    line-height: 19px;
    white-space: nowrap;
}

.tr > span {
    display: flex;
    align-items: center;
    padding-left: 6px;
}

.tree-head {
    height: 18px;
    line-height: 18px;
    background: linear-gradient(#f3f8fd, #dfeaf6);
    border-bottom: 1px solid #8da4c3;
}

.tree-head > span {
    height: 17px;
    padding-left: 8px;
    border-right: 1px solid #a9bdd6;
}

.tree-head > span:nth-child(2) {
    padding-left: 3px;
}

.tree-head > span:first-child {
    padding-left: 0;
}

.tree-body {
    margin-top: -5px;
    clip-path: inset(5px 0 0 0);
}

.tr > .dir {
    gap: 5px;
    padding-left: 20px;
}

.dir i {
    width: 9px;
    height: 9px;
    border: 1px solid #888;
    margin-right: 4px;
    font-style: normal;
    line-height: 7px;
    text-align: center;
}

.tr > .leaf {
    gap: 6px;
    height: 19px;
    margin-left: 24px;
    padding-left: 30px;
    background:
        repeating-linear-gradient(#777 0 1px, transparent 1px 2px) 0 0 / 1px 100% no-repeat,
        repeating-linear-gradient(#777 0 1px, transparent 1px 2px) 16px 0 / 1px 100% no-repeat,
        repeating-linear-gradient(90deg, #777 0 1px, transparent 1px 2px) 16px 9px / 10px 1px no-repeat;
}

.tr > .leaf.last {
    background:
        repeating-linear-gradient(#777 0 1px, transparent 1px 2px) 0 0 / 1px 100% no-repeat,
        repeating-linear-gradient(#777 0 1px, transparent 1px 2px) 16px 0 / 1px 10px no-repeat,
        repeating-linear-gradient(90deg, #777 0 1px, transparent 1px 2px) 16px 9px / 10px 1px no-repeat;
}

.picked {
    background: linear-gradient(90deg, #fff 52px, transparent 52px), linear-gradient(#fff3c4, #fbd043 55%, #fde795);
}

.flow .scroll {
    width: 17px;
    padding: 6px 4px;
    border-top: 1px solid #7b97bd;
    background: #f2f2f2;
}

/* Detail pane */
.detail {
    flex: 1;
    display: flex;
    flex-direction: column;
    min-width: 0;
}

.detail-tabs {
    display: flex;
    height: 25px;
    background: linear-gradient(#c0d2ea, #dce9f8);
    border-bottom: 1px solid #a9bbd0;
}

.detail-tabs button {
    padding: 0 8px;
    color: #000;
    line-height: 22px;
}

.detail-tabs .on {
    position: relative;
    width: 69px;
    padding: 0 4px 0 0;
    background: linear-gradient(#2454ac, #3b81dc);
    color: #fff;
    font-size: 13px;
    font-weight: bold;
}

.detail-tabs .on::after {
    content: "";
    position: absolute;
    left: 29px;
    bottom: 0;
    border: 5px solid transparent;
    border-bottom-color: #fff;
    border-top: none;
}

.detail-tabs .down {
    margin: 10px 5px 0 auto;
    color: #000;
    border-width: 5px;
    border-bottom: none;
}

.detail-body {
    flex: 1;
    display: flex;
    min-height: 0;
}

.params {
    flex: none;
    display: flex;
    flex-direction: column;
    width: 377px;
    border-right: 2px solid #4b76b4;
    border-left: 2px solid #4b76b4;
    background: #fff;
}

.slant-bar {
    height: 29px;
    flex: none;
    padding-top: 3px;
    background: linear-gradient(#cfe0f8, #f4f9ff 23px, #456ca8 23px, #456ca8 24px, #8fb3e8 24px);
}

.slant {
    position: relative;
    width: 98px;
    height: 21px;
}

.slant b {
    position: absolute;
    inset: 0 0 0 34px;
    color: #000;
    font-size: 13px;
    line-height: 20px;
}

.params-scroll {
    overflow: hidden;
}

.values {
    width: 399px;
}

.values td {
    border: 1px solid #bdd0ea;
    background: #f2f2f2;
    white-space: pre;
}

.values tr:nth-child(even) td {
    background: #e9f2fb;
}

.values tr:nth-child(even) td:nth-child(3) {
    background: #fff;
}

.values td:first-child, .values tr:nth-child(even) td:first-child {
    border-color: #8da4c3;
    border-left: none;
    background: linear-gradient(90deg, #dbe7f5 60%, #c3d4ea);
}

.values .key {
    color: #b5178c;
}

.values tr.cur .key {
    background: #acd1f7;
}

.notes {
    flex: 1;
    display: flex;
    flex-direction: column;
    min-width: 0;
    border-left: 2px solid #4b76b4;
    border-right: 2px solid #4b76b4;
}

.notes-grid {
    flex: 1;
    display: grid;
    grid-template-columns: 198px minmax(0, 1fr);
    grid-template-rows: 26px minmax(0, 1fr);
}

.notes-grid label {
    padding-left: 2px;
    border-right: 1px solid #5d7595;
    border-bottom: 2px solid #7b8da6;
    background: linear-gradient(#f3f8fd, #dbe7f5);
    color: #26407c;
    line-height: 24px;
}

.memo {
    display: flex;
    border-right: 2px solid #7b97bd;
    background: #efefef;
}

.memo textarea {
    flex: 1;
    min-width: 0;
    padding: 1px 0 1px 1px;
    overflow: hidden;
    resize: none;
    color: #000;
    line-height: 12px;
    white-space: pre;
}

.memo .scroll {
    width: 14px;
    padding: 7px 2px;
    border-left: 1px solid #fafafa;
}

.memo .up {
    border-bottom-color: #999;
}

/* Word window, floats over the application */
.word {
    position: absolute;
    left: 0;
    top: 502px;
    bottom: 0;
    width: 874px;
    display: flex;
    flex-direction: column;
    padding-right: 6px;
    border-top: 1px solid #27343f;
    border-right: 1px solid #27343f;
    border-radius: 0 7px 0 0;
    background: linear-gradient(#b5d4f5, #a9cdf5 60px, #a8cdf6);
    box-shadow: 2px 0 12px rgba(0, 0, 0, 0.65);
    font-family: "Noto Sans", "Noto Sans CJK SC", sans-serif;
    color: #15428b;
}

/* Glass caption: soft shapes of what lies behind it */
.word-title {
    display: flex;
    align-items: center;
    height: 28px;
    background:
        radial-gradient(ellipse at center, rgba(60, 85, 115, 0.55), transparent 70%) 600px 9px / 32px 18px no-repeat,
        radial-gradient(ellipse at center, rgba(60, 85, 115, 0.55), transparent 70%) 674px 9px / 44px 18px no-repeat,
        linear-gradient(90deg, transparent, rgba(70, 105, 150, 0.5), transparent) 150px 0 / 18px 28px no-repeat,
        linear-gradient(90deg, transparent, rgba(70, 115, 185, 0.6), transparent) 178px 0 / 18px 28px no-repeat;
    color: #111;
}

.qat {
    display: flex;
    align-items: center;
    gap: 8px;
    height: 22px;
    padding: 0 10px 0 13px;
    border: 1px solid #8fa9c8;
    border-left: none;
    border-radius: 0 11px 11px 0;
}

.more {
    margin-left: 7px;
}

.doc-name {
    flex: 1;
    padding-right: 34px;
    text-align: center;
    text-shadow: 0 0 6px #fff;
    font-size: 13px;
}

.win-btns {
    display: flex;
    align-self: flex-start;
    height: 19px;
    border: 1px solid #4b5866;
    border-top: none;
    border-radius: 0 0 4px 4px;
    overflow: hidden;
}

.win-btns button {
    width: 28px;
    padding-left: 8px;
    border-right: 1px solid #4b5866;
    background: linear-gradient(#d5e0ec, #a6b6c8 50%, #c2d2e2);
}

.win-btns .close {
    width: 46px;
    padding-left: 17px;
    border-right: none;
    background: linear-gradient(#e2a59a, #c53a22 50%, #d9694c);
}

.word-inner {
    flex: 1;
    display: flex;
    flex-direction: column;
    min-height: 0;
    border-top: 1px solid #4c6684;
    border-right: 1px solid #4c6684;
    background: #bfdbff;
}

.ribbon-tabs {
    display: flex;
    height: 27px;
    padding: 2px 4px 0 17px;
}

.ribbon-tabs button {
    height: 25px;
    padding: 0 14px 0 15px;
    line-height: 20px;
}

.ribbon-tabs .on {
    width: 48px;
    margin-right: 3px;
    padding: 0;
    border: 1px solid #8db2e3;
    border-bottom: none;
    border-radius: 4px 4px 0 0;
    background: #e6f0fb;
}

.help {
    margin: 4px 0 0 auto;
}

.ribbon {
    display: flex;
    gap: 3px;
    height: 105px;
    padding: 2px 0;
    border: 1px solid #8db2e3;
    border-left: none;
    border-radius: 0 4px 4px 0;
    background: linear-gradient(#dbe8f7, #c9dcf2 20px, #c6dbf3 60px, #d9f1fd);
}

.rgroup {
    display: flex;
    flex-direction: column;
    justify-content: space-between;
    height: 100px;
    border: 1px solid #9fbfe2;
    border-radius: 3px;
    background: linear-gradient(#dde9f6, #d0dff1 16px, #c7d8ed 16px, #dbe8f6);
}

.wechat {
    width: 46px;
    border-left: none;
    border-radius: 0 3px 3px 0;
}

.clip { width: 72px; }
.font { width: 207px; }
.para { width: 167px; }
.styles { width: 297px; }
.edit { width: 41px; }

.rlabel {
    position: relative;
    height: 20px;
    padding-right: 20px;
    background: #c1d8f0;
    color: #3e6aaa;
    line-height: 20px;
    text-align: center;
}

.rlabel svg {
    position: absolute;
    right: 5px;
    top: 3px;
}

.wechat .rlabel {
    display: flex;
    justify-content: flex-end;
    padding-right: 11px;
    white-space: nowrap;
}

.rbody {
    display: flex;
    padding: 4px 3px 0;
}

.big {
    display: flex;
    flex-direction: column;
    align-items: center;
    gap: 6px;
    white-space: nowrap;
}

.clip .big {
    width: 40px;
}

.wechat .big {
    width: 36px;
    align-items: flex-end;
}

.ribbon .caret {
    color: #5676a4;
}

.minis {
    display: flex;
    flex-direction: column;
    gap: 7px;
    padding: 1px 0 0 5px;
}

.rows {
    flex-direction: column;
    gap: 2px;
}

.row {
    display: flex;
    align-items: center;
    gap: 4px;
    height: 23px;
}

.row select {
    appearance: none;
    height: 25px;
    border: 1px solid #b4cce8;
    background:
        linear-gradient(#5676a4, #5676a4) calc(100% - 5px) 11px / 5px 1px no-repeat,
        linear-gradient(#5676a4, #5676a4) calc(100% - 6px) 12px / 3px 1px no-repeat,
        linear-gradient(#5676a4, #5676a4) calc(100% - 7px) 13px / 1px 1px no-repeat,
        #e8f1fb;
    color: #000;
}

.face {
    width: 91px;
}

.size {
    width: 54px;
    margin-left: -5px;
    padding-left: 2px;
}

.set {
    display: flex;
    border: 1px solid #9bb9de;
    border-radius: 3px;
}

.set button, .one {
    display: flex;
    align-items: center;
    justify-content: center;
    gap: 4px;
    height: 20px;
    padding: 0 4px;
    color: #222;
    font-family: "Liberation Serif", "Noto Sans CJK SC", serif;
    font-size: 14px;
}

.font .set button + button {
    border-left: 1px solid #c0d4ea;
}

.one {
    width: 24px;
    height: 22px;
    padding: 0;
    border: 1px solid #9bb9de;
    border-radius: 3px;
}

.py {
    fill: #222;
    font: 9px "Liberation Sans", sans-serif;
    text-anchor: middle;
}

.wen {
    fill: #2c4fb5;
    font: bold 11px "Noto Sans CJK SC", sans-serif;
    text-anchor: middle;
}

.boxed {
    width: 16px;
    border: 1px solid #333;
    font-weight: bold;
    line-height: 15px;
}

.shade {
    width: 14px;
    background: #b7b3ac;
}

.ring {
    width: 17px;
    border: 1px solid #222;
    border-radius: 50%;
    font-size: 11px;
    line-height: 15px;
}

.sm {
    font-size: 12px;
}

.set sup, .set sub {
    color: #2c5bb5;
    font-size: 8px;
    line-height: 8px;
}

.set .hl {
    width: 34px;
    background: linear-gradient(#ff0, #ff0) 4px 15px / 16px 4px no-repeat;
    line-height: 12px;
}

.set .fc {
    width: 32px;
    background: linear-gradient(#000, #000) 4px 15px / 16px 4px no-repeat;
    color: #2c5bb5;
    line-height: 12px;
}

.w33s button { width: 33px; padding: 0; }
.w22s button { width: 22px; padding: 0; gap: 0; }
.w23s button { width: 23px; padding: 0; }
.w22s .slim { width: 16px; }
.w22s .wide { width: 27px; }

.set .sel {
    background: linear-gradient(#fbd08c, #fda83b 50%, #fee08c);
}

.gallery {
    display: flex;
    gap: 8px;
    height: 59px;
    margin-right: 6px;
    padding: 3px 0 3px 3px;
    border: 1px solid #b4cce8;
    background: #d5e4f5;
}

.card {
    display: flex;
    flex-direction: column;
    justify-content: space-between;
    width: 64px;
    height: 50px;
    overflow: hidden;
    background: #fff;
}

.card b {
    display: block;
    width: 58px;
    height: 32px;
    margin-left: 3px;
    overflow: hidden;
    color: #000;
    font-family: "Liberation Serif", serif;
    font-size: 21px;
    line-height: 32px;
    text-align: left;
    white-space: nowrap;
}

.card.h1 b {
    font-size: 26px;
    line-height: 28px;
}

.card span {
    width: 64px;
    color: #1a1a6c;
    text-align: center;
}

.steps {
    display: flex;
    flex-direction: column;
    width: 14px;
    margin: -3px 0 -3px -3px;
}

.steps button {
    flex: 1;
    display: flex;
    align-items: center;
    justify-content: center;
    border: 1px solid #b4cce8;
}

.steps .up {
    border-width: 3px;
    border-top: none;
    border-bottom-color: #aaa;
}

.styles .big {
    width: 48px;
}

.edit .big {
    padding-top: 4px;
    gap: 5px;
}

.tile {
    width: 31px;
    height: 31px;
    padding: 6px 7px;
    border: 1px solid #a9c4e4;
    border-radius: 3px;
    background: linear-gradient(#e7f0fb 70%, #c6d8ef 70%);
}

/* Document */
.doc-area {
    flex: 1;
    display: flex;
    min-height: 0;
    padding-top: 7px;
    background: #b0ccf0;
    overflow: hidden;
}

.sheet {
    position: relative;
    flex: 1;
    min-width: 0;
    background: #fff;
    color: #000;
    font-family: "Liberation Serif", "Noto Sans CJK SC", serif;
    font-size: 14px;
    line-height: 21px;
}

.sheet p svg {
    display: inline-block;
}

.sheet .figure {
    display: flex;
    align-items: flex-end;
    height: 160px;
    padding-left: 120px;
}

.figure .ret {
    margin-left: 1px;
}

.note {
    padding: 3px 0 0 98px;
}

.note mark {
    display: inline-block;
    padding: 0 6px 0 2px;
    background: #abcdf2;
    color: #10284c;
    line-height: 19px;
}

.wavy {
    text-decoration: underline wavy #d03030 1px;
}

.empty {
    padding-left: 37px;
}

.chapter {
    display: flex;
    align-items: center;
    padding-left: 37px;
    font-weight: bold;
}

.chapter span {
    width: 27px;
}

.item {
    display: flex;
    align-items: center;
    padding-left: 74px;
}

.item span {
    width: 24px;
}

.yellow-box {
    position: absolute;
    left: 81px;
    top: 153px;
    width: 470px;
    height: 44px;
    border: 4px solid #ffff00;
    box-shadow: 2px 3px 4px rgba(0, 0, 0, 0.6), inset 2px 3px 4px rgba(0, 0, 0, 0.5);
}

.pcb text {
    font-family: "DejaVu Sans", sans-serif;
    fill: #e01818;
}

.pcb .mark-sm text { font-size: 7px; fill: #e01818; }
.pcb .mark-md text { font-size: 14px; }
.pcb .mark-lg text { font-size: 21px; }
.pcb text.huge { font: bold 44px "Liberation Sans Narrow", "Liberation Sans", sans-serif; fill: #f50808; }
.pcb text.one-mark { font: bold 38px "Liberation Sans", sans-serif; fill: #f50808; }
.pcb text.cap { font: bold 9px "Liberation Mono", monospace; fill: #d5e2ff; }

.gutter {
    width: 18px;
    background: linear-gradient(90deg, #5c7baf, #9dbbe8);
}

.doc-scroll {
    width: 15px;
    background: linear-gradient(#b4cdf0 22px, #7d9cc9 22px);
}

.pane {
    display: flex;
    flex-direction: column;
    align-items: center;
    gap: 11px;
    width: 51px;
    margin-top: -4px;
    padding-top: 14px;
    background: #ececec;
    font-family: "Noto Sans CJK SC", sans-serif;
}

.pane button {
    display: flex;
    flex-direction: column;
    align-items: center;
    gap: 3px;
    color: #222;
    font-size: 10px;
    line-height: 15px;
    white-space: nowrap;
}

.pane button:first-child {
    margin-bottom: 8px;
}

/* Input method bar */
.ime {
    position: absolute;
    right: 0;
    top: 785px;
    display: flex;
    align-items: center;
    gap: 7px;
    width: 79px;
    height: 26px;
    padding-left: 4px;
    background: linear-gradient(#9da1a4, #5c6164 30%, #54595b);
    color: #fff;
    font-size: 12px;
}
```
